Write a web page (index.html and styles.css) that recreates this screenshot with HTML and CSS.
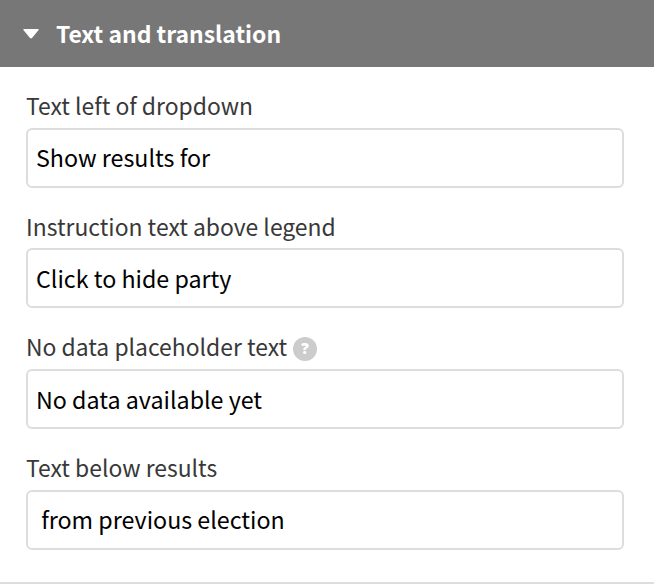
FILE: index.html
```html
<!DOCTYPE html>
<html lang="en">
<head>
<meta charset="utf-8">
<title>Text and translation</title>
<link rel="stylesheet" href="styles.css">
</head>
<body>
<section class="panel">
  <header class="panel-header">
    <svg class="caret" width="16" height="10" viewBox="0 0 16 10"><path d="M1 0h14q1.200.2.4 1.300L9 9q-1 .9-2 0L.6 1.300Q-.2.2 1 0z" fill="#fff"/></svg>
    <h1 class="panel-title">Text and translation</h1>
  </header>
  <div class="fields">
    <div class="field">
      <div class="label">Text left of dropdown</div>
      <div class="input">Show results for</div>
    </div>
    <div class="field">
      <div class="label">Instruction text above legend</div>
      <div class="input">Click to hide party</div>
    </div>
    <div class="field">
      <div class="label">No data placeholder text <span class="help">?</span></div>
      <div class="input">No data available yet</div>
    </div>
    <div class="field">
      <div class="label">Text below results</div>
      <div class="input"> from previous election</div>
    </div>
  </div>
</section>
</body>
</html>
```
FILE: styles.css
```css
* { box-sizing: border-box; }
body {
  margin: 0;
  background: #fff;
  font-family: "Noto Sans CJK SC", sans-serif;
}
.panel {
  height: 584px;
  border-bottom: 2px solid #ddd;
}
.panel-header {
  display: flex;
  align-items: center;
  gap: 17px;
  height: 67px;
  padding-left: 23px;
  background: #777;
  color: #fff;
}
.panel-title {
  margin: 0;
  padding-bottom: 2px;
  font-size: 22.93px;
  font-weight: 700;
  line-height: 36px;
}
.fields { padding: 24.8px 30px 0 26px; }
.field { margin-bottom: 24.6px; }
.label {
  display: flex;
  align-items: center;
  height: 36px;
  padding-bottom: 9.2px;
  font-size: 22.9px;
  line-height: 28px;
  color: #383838;
}
.input {
  display: flex;
  align-items: center;
  height: 60px;
  padding: 0 0 0.8px 8px;
  border: 2px solid #ddd;
  border-radius: 6px;
  font-size: 23.25px;
  line-height: 56px;
  white-space: pre;
  color: #000;
}
.help {
  width: 24px;
  height: 24px;
  margin: 5.2px 0 0 6px;
  border-radius: 50%;
  background: #ccc;
  color: #fff;
  font-family: "Open Sans", sans-serif;
  font-size: 15px;
  font-weight: 800;
  line-height: 23px;
  text-align: center;
}
```
